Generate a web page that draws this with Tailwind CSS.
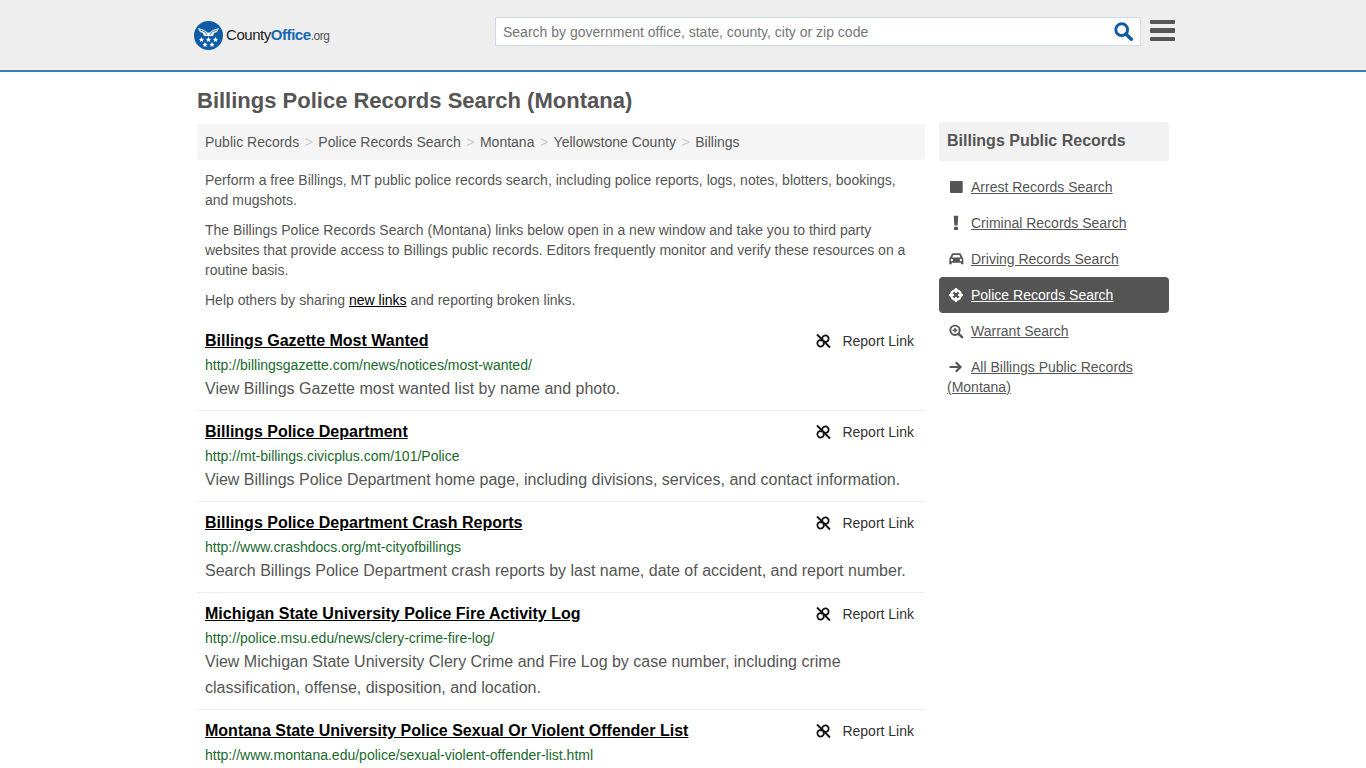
<!DOCTYPE html>
<html lang="en">
<head>
    <meta charset="UTF-8">
    <meta name="viewport" content="width=device-width, initial-scale=1.0">
    <title>Billings Police Records Search (Montana)</title>
    <script src="https://cdn.jsdelivr.net/npm/@tailwindcss/browser@4"></script>
</head>
<body class="bg-white h-[768px] overflow-hidden font-['Liberation_Sans',Arial,sans-serif] text-[#555]">

    <header class="h-[72px] bg-[#eeeeee] border-b-2 border-[#3b7db5]">
        <div class="w-[972px] ml-[197px] flex items-start">
            <a href="#" class="w-[301px] h-[70px] shrink-0 flex items-center -ml-[3px]">
                <svg class="w-[29px] h-[29px] shrink-0" viewBox="0 0 29 29">
                    <circle cx="14.5" cy="14.5" r="14.5" fill="#0e5ba6"/>
                    <path d="M4 7l6 2 4 3 .5-1 .5 1 4-3 6-2-2 4-3 1-1 3h-4l-.5 1-.5-1h-4l-1-3-3-1z" fill="#fff"/>
                    <path d="M6 9l5 2 2 3M23 9l-5 2-2 3" fill="none" stroke="#0e5ba6" stroke-width=".8"/>
                    <path d="M7.500 16l.8 1.800 1.900.1-1.500 1.200.5 1.900-1.700-1-1.700 1 .5-1.900-1.500-1.200 1.900-.1zM14.500 16l.8 1.800 1.900.1-1.500 1.200.5 1.900-1.700-1-1.700 1 .5-1.900-1.500-1.200 1.900-.1zM21.500 16l.8 1.800 1.900.1-1.500 1.200.5 1.900-1.700-1-1.700 1 .5-1.900-1.500-1.200 1.900-.1zM11 21l.8 1.800 1.900.1-1.500 1.200.5 1.900-1.700-1-1.700 1 .5-1.900-1.500-1.200 1.900-.1zM18 21l.8 1.800 1.900.1-1.500 1.200.5 1.900-1.700-1-1.700 1 .5-1.900-1.500-1.200 1.900-.1z" fill="#fff"/>
                </svg>
                <span class="ml-[3px] text-[15px] tracking-[-0.45px] text-[#222]">County<span class="font-bold text-[#1668b3]">Office</span><span class="text-[12px] text-[#555]">.org</span></span>
            </a>
            <form class="mt-[17px] w-[646px] h-[29px] shrink-0 bg-white border border-[#cfdbe6] flex items-center justify-between">
                <span class="pl-[7px] pt-[2px] text-[14px] text-[#757575]">Search by government office, state, county, city or zip code</span>
                <svg class="w-[19px] h-[19px] mr-[7px]" viewBox="0 0 19 19" fill="none" stroke="#0e5ba6">
                    <circle cx="7.700" cy="7.700" r="5.900" stroke-width="2.900"/>
                    <path d="M12 12l5.300 5.300" stroke-width="3.400" stroke-linecap="round"/>
                </svg>
            </form>
            <button class="ml-[9px] mt-[20px] w-[25px] shrink-0 flex flex-col gap-[4.200px]">
                <span class="h-[4.300px] bg-[#555] rounded-[1px]"></span>
                <span class="h-[4.300px] bg-[#555] rounded-[1px]"></span>
                <span class="h-[4.300px] bg-[#555] rounded-[1px]"></span>
            </button>
        </div>
    </header>

    <div class="w-[972px] ml-[197px] flex gap-[14px]">
        <main class="w-[728px] shrink-0">
            <h1 class="mt-[15px] text-[22px] leading-[27px] font-bold text-[#555]">Billings Police Records Search (Montana)</h1>

            <nav class="mt-[10px] h-[36px] bg-[#f5f5f5] rounded-[3px] px-[8px] flex items-center text-[14px] text-[#555]">
                <a href="#">Public Records</a><span class="mx-[5.500px] text-[#ccc]">&gt;</span>
                <a href="#">Police Records Search</a><span class="mx-[5.500px] text-[#ccc]">&gt;</span>
                <a href="#">Montana</a><span class="mx-[5.500px] text-[#ccc]">&gt;</span>
                <a href="#">Yellowstone County</a><span class="mx-[5.500px] text-[#ccc]">&gt;</span>
                <a href="#">Billings</a>
            </nav>

            <div class="px-[8px] mt-[10px] text-[14px] leading-[20px] space-y-[10px]">
                <p>Perform a free Billings, MT public police records search, including police reports, logs, notes, blotters, bookings, and mugshots.</p>
                <p>The Billings Police Records Search (Montana) links below open in a new window and take you to third party websites that provide access to Billings public records. Editors frequently monitor and verify these resources on a routine basis.</p>
                <p>Help others by sharing <a href="#" class="text-black underline">new links</a> and reporting broken links.</p>
            </div>

            <div id="results" class="mt-[10px]">
                <div class="px-[8px] pt-[9px] pb-[8px] border-b border-[#eeeeee]">
                    <div class="flex justify-between items-center h-[24px]">
                        <a href="#" class="text-[16px] font-bold text-black underline">Billings Gazette Most Wanted</a>
                        <a href="#" class="flex items-center text-[14px] text-[#333] pr-[3px]">
                            <svg class="w-[16px] h-[16px] mr-[11px]" viewBox="0 0 16 16" fill="none" stroke="#111" stroke-width="1.800"><path d="M2 1.500l13 13"/><path d="M7.500 7.500L7.200 4.800a3.300 3.300 0 1 1 4.100 4.100L8.500 8.500M8.500 8.500l.3 2.700a3.300 3.300 0 1 1-4.100-4.100l2.800.4"/></svg>
                            Report Link
                        </a>
                    </div>
                    <a href="#" class="block text-[14px] leading-[20px] mt-[2px] mb-[1px] text-[#19692c]">http://billingsgazette.com/news/notices/most-wanted/</a>
                    <p class="text-[16px] leading-[26px]">View Billings Gazette most wanted list by name and photo.</p>
                </div>
                <div class="px-[8px] pt-[9px] pb-[8px] border-b border-[#eeeeee]">
                    <div class="flex justify-between items-center h-[24px]">
                        <a href="#" class="text-[16px] font-bold text-black underline">Billings Police Department</a>
                        <a href="#" class="flex items-center text-[14px] text-[#333] pr-[3px]">
                            <svg class="w-[16px] h-[16px] mr-[11px]" viewBox="0 0 16 16" fill="none" stroke="#111" stroke-width="1.800"><path d="M2 1.500l13 13"/><path d="M7.500 7.500L7.200 4.800a3.300 3.300 0 1 1 4.100 4.100L8.500 8.500M8.500 8.500l.3 2.700a3.300 3.300 0 1 1-4.100-4.100l2.800.4"/></svg>
                            Report Link
                        </a>
                    </div>
                    <a href="#" class="block text-[14px] leading-[20px] mt-[2px] mb-[1px] text-[#19692c]">http://mt-billings.civicplus.com/101/Police</a>
                    <p class="text-[16px] leading-[26px]">View Billings Police Department home page, including divisions, services, and contact information.</p>
                </div>
                <div class="px-[8px] pt-[9px] pb-[8px] border-b border-[#eeeeee]">
                    <div class="flex justify-between items-center h-[24px]">
                        <a href="#" class="text-[16px] font-bold text-black underline">Billings Police Department Crash Reports</a>
                        <a href="#" class="flex items-center text-[14px] text-[#333] pr-[3px]">
                            <svg class="w-[16px] h-[16px] mr-[11px]" viewBox="0 0 16 16" fill="none" stroke="#111" stroke-width="1.800"><path d="M2 1.500l13 13"/><path d="M7.500 7.500L7.200 4.800a3.300 3.300 0 1 1 4.100 4.100L8.500 8.500M8.500 8.500l.3 2.700a3.300 3.300 0 1 1-4.100-4.100l2.800.4"/></svg>
                            Report Link
                        </a>
                    </div>
                    <a href="#" class="block text-[14px] leading-[20px] mt-[2px] mb-[1px] text-[#19692c]">http://www.crashdocs.org/mt-cityofbillings</a>
                    <p class="text-[16px] leading-[26px]">Search Billings Police Department crash reports by last name, date of accident, and report number.</p>
                </div>
                <div class="px-[8px] pt-[9px] pb-[8px] border-b border-[#eeeeee]">
                    <div class="flex justify-between items-center h-[24px]">
                        <a href="#" class="text-[16px] font-bold text-black underline">Michigan State University Police Fire Activity Log</a>
                        <a href="#" class="flex items-center text-[14px] text-[#333] pr-[3px]">
                            <svg class="w-[16px] h-[16px] mr-[11px]" viewBox="0 0 16 16" fill="none" stroke="#111" stroke-width="1.800"><path d="M2 1.500l13 13"/><path d="M7.500 7.500L7.200 4.800a3.300 3.300 0 1 1 4.100 4.100L8.500 8.500M8.500 8.500l.3 2.700a3.300 3.300 0 1 1-4.100-4.100l2.800.4"/></svg>
                            Report Link
                        </a>
                    </div>
                    <a href="#" class="block text-[14px] leading-[20px] mt-[2px] mb-[1px] text-[#19692c]">http://police.msu.edu/news/clery-crime-fire-log/</a>
                    <p class="text-[16px] leading-[26px]">View Michigan State University Clery Crime and Fire Log by case number, including crime classification, offense, disposition, and location.</p>
                </div>
                <div class="px-[8px] pt-[9px] pb-[8px]">
                    <div class="flex justify-between items-center h-[24px]">
                        <a href="#" class="text-[16px] font-bold text-black underline">Montana State University Police Sexual Or Violent Offender List</a>
                        <a href="#" class="flex items-center text-[14px] text-[#333] pr-[3px]">
                            <svg class="w-[16px] h-[16px] mr-[11px]" viewBox="0 0 16 16" fill="none" stroke="#111" stroke-width="1.800"><path d="M2 1.500l13 13"/><path d="M7.500 7.500L7.200 4.800a3.300 3.300 0 1 1 4.100 4.100L8.500 8.500M8.500 8.500l.3 2.700a3.300 3.300 0 1 1-4.100-4.100l2.800.4"/></svg>
                            Report Link
                        </a>
                    </div>
                    <a href="#" class="block text-[14px] leading-[20px] mt-[2px] mb-[1px] text-[#19692c]">http://www.montana.edu/police/sexual-violent-offender-list.html</a>
                </div>
            </div>
        </main>

        <aside class="w-[230px] shrink-0 pt-[50px]">
            <h2 class="h-[39px] bg-[#f2f2f2] rounded-[3px] px-[8px] pb-[2px] flex items-center text-[16px] font-bold text-[#555]">Billings Public Records</h2>
            <ul class="mt-[8px] text-[14px] leading-[20px]">
                <li class="py-[8px] px-[8px]"><a href="#" class="flex items-center">
                    <svg class="w-[16px] h-[16px] mr-[8px] shrink-0" viewBox="0 0 16 16" fill="#555"><rect x="3" y="2" width="12.700" height="12" rx="1"/></svg><span class="underline">Arrest Records Search</span></a></li>
                <li class="py-[8px] px-[8px]"><a href="#" class="flex items-center">
                    <svg class="w-[16px] h-[16px] mr-[8px] shrink-0" viewBox="0 0 16 16" fill="#555"><path d="M6.700 .8h4.600l-.7 9.700H7.400z"/><rect x="7" y="11.700" width="4" height="3.300" rx=".6"/></svg><span class="underline">Criminal Records Search</span></a></li>
                <li class="py-[8px] px-[8px]"><a href="#" class="flex items-center">
                    <svg class="w-[16px] h-[16px] mr-[8px] shrink-0 overflow-visible" viewBox="0 0 16 16" fill="#555"><path transform="translate(2.300 2.300) scale(1.080 1.100) translate(-2 -3)" fill-rule="evenodd" d="M5.500 3h6c.7 0 1.200.4 1.500 1l1.100 2.700c.6.300.9.800.9 1.500V13h-2.200v-1.500H4.200V13H2V8.200c0-.7.300-1.200.9-1.500L4 4c.3-.6.800-1 1.500-1zM5.600 4.500L4.700 6.800h7.600l-.9-2.300zM4.300 8a1.100 1.100 0 1 0 0 2.200 1.100 1.100 0 0 0 0-2.200zm8.400 0a1.100 1.100 0 1 0 0 2.200 1.100 1.100 0 0 0 0-2.200z"/></svg><span class="underline">Driving Records Search</span></a></li>
                <li class="py-[8px] px-[8px] bg-[#555] rounded-[4px] text-white"><a href="#" class="flex items-center">
                    <svg class="w-[16px] h-[16px] mr-[8px] shrink-0 overflow-visible" viewBox="0 0 16 16" fill="none" stroke="#fff"><circle cx="9" cy="8" r="4.800" stroke-width="2.400"/><path d="M9 1v5M9 10v5M2 8h5M11 8h5" stroke-width="2"/></svg><span class="underline">Police Records Search</span></a></li>
                <li class="py-[8px] px-[8px]"><a href="#" class="flex items-center">
                    <svg class="w-[16px] h-[16px] mr-[8px] shrink-0 overflow-visible" viewBox="0 0 16 16" fill="none" stroke="#555"><circle cx="8" cy="7.300" r="4.700" stroke-width="1.900"/><path d="M11.500 10.800l3.600 3.400" stroke-width="2.500" stroke-linecap="round"/><path d="M5.700 7.300h4.600M8 5v4.600" stroke-width="1.500"/></svg><span class="underline">Warrant Search</span></a></li>
                <li class="py-[8px] px-[8px]"><a href="#">
                    <svg class="inline-block align-[-3px] w-[16px] h-[16px] mr-[8px]" viewBox="0 0 16 16" fill="none" stroke="#555" stroke-width="2.200"><path d="M2.500 8h10.500M8.800 3.300L13.500 8l-4.700 4.700"/></svg><span class="underline">All Billings Public Records (Montana)</span></a></li>
            </ul>
        </aside>
    </div>
</body>
</html>
